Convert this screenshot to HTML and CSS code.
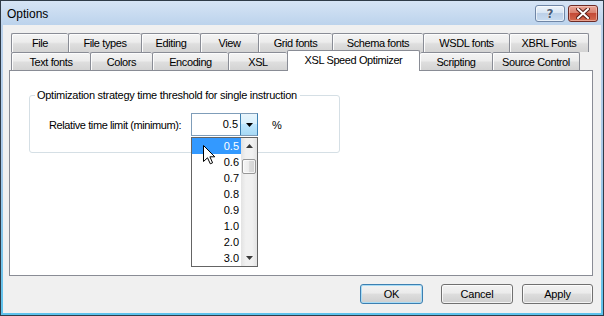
FILE: index.html
```html
<!DOCTYPE html>
<html>
<head>
<meta charset="utf-8">
<link rel="stylesheet" href="styles.css">
</head>
<body>
<div class="window">
  <div class="titlebar">
    <span class="title">Options</span>
    <div class="caption-buttons">
      <div class="cbtn help"><span class="help-glyph">?</span></div>
      <div class="cbtn close">
        <svg width="14" height="11" viewBox="0 0 14 11">
          <path d="M2 1 L12 10 M12 1 L2 10" stroke="#5a1e18" stroke-width="4" stroke-linecap="square"/>
          <path d="M2 1 L12 10 M12 1 L2 10" stroke="#ffffff" stroke-width="2" stroke-linecap="square"/>
        </svg>
      </div>
    </div>
  </div>
  <div class="client">
    <div class="tabs">
      <div class="tabrow row1">
        <div class="tab w57">File</div>
        <div class="tab w73">File types</div>
        <div class="tab w59">Editing</div>
        <div class="tab w58">View</div>
        <div class="tab w74">Grid fonts</div>
        <div class="tab w91">Schema fonts</div>
        <div class="tab w86">WSDL fonts</div>
        <div class="tab w80 last">XBRL Fonts</div>
      </div>
      <div class="tabrow row2">
        <div class="tab w79">Text fonts</div>
        <div class="tab w62">Colors</div>
        <div class="tab w76">Encoding</div>
        <div class="tab w59">XSL</div>
        <div class="tab w133 selected">XSL Speed Optimizer</div>
        <div class="tab w72">Scripting</div>
        <div class="tab w88 last">Source Control</div>
      </div>
    </div>
    <div class="panel">
      <fieldset class="group">
        <legend>Optimization strategy time threshold for single instruction</legend>
        <div class="field-row">
          <span class="label">Relative time limit (minimum):</span>
          <div class="combo">
            <span class="combo-value">0.5</span>
            <span class="combo-btn">
              <svg width="7" height="4" viewBox="0 0 7 4"><path d="M0 0 H7 L3.5 4 Z" fill="#000"/></svg>
            </span>
            <div class="dropdown">
              <div class="items">
                <div class="item active">0.5</div>
                <div class="item">0.6</div>
                <div class="item">0.7</div>
                <div class="item">0.8</div>
                <div class="item">0.9</div>
                <div class="item">1.0</div>
                <div class="item">2.0</div>
                <div class="item">3.0</div>
              </div>
              <div class="scrollbar">
                <div class="sb-arrow">
                  <svg width="7" height="4" viewBox="0 0 7 4"><path d="M3.5 0 L7 4 H0 Z" fill="#3b3b3b"/></svg>
                </div>
                <div class="sb-track">
                  <div class="sb-thumb"></div>
                </div>
                <div class="sb-arrow">
                  <svg width="7" height="4" viewBox="0 0 7 4"><path d="M0 0 H7 L3.5 4 Z" fill="#3b3b3b"/></svg>
                </div>
              </div>
            </div>
          </div>
          <span class="unit">%</span>
        </div>
      </fieldset>
    </div>
    <div class="dialog-buttons">
      <button class="btn default w63">OK</button>
      <button class="btn w72 gap18">Cancel</button>
      <button class="btn w71 gap9">Apply</button>
    </div>
  </div>
  <svg class="cursor" width="13" height="20" viewBox="0 0 13 20">
    <path d="M0.5 0.5 L0.5 16.5 L4.5 12.8 L7.3 18.8 L9.6 17.8 L6.9 11.8 L11.8 11.8 Z" fill="#fff" stroke="#000" stroke-width="1" stroke-linejoin="miter"/>
  </svg>
</div>
</body>
</html>
```

FILE: styles.css
```css
* { box-sizing: border-box; }

body {
  margin: 0;
  font-family: "Liberation Sans", Arial, sans-serif;
  font-size: 11px;
  letter-spacing: -0.4px;
  color: #000;
}

.window {
  position: relative;
  width: 604px;
  height: 316px;
  border: 1px solid #2f3b48;
  background: linear-gradient(to bottom, #d3e2f4 0, #bcd3ec 24px, #a9c8e8 50%, #5cc2ec 100%);
  display: flex;
  flex-direction: column;
}

.titlebar {
  height: 24px;
  flex: none;
  display: flex;
  align-items: flex-start;
  justify-content: space-between;
  padding: 0 5px 0 6px;
  background: linear-gradient(to bottom, #d6e4f5, #bcd3ec);
}

.title {
  font-size: 12px;
  letter-spacing: 0;
  line-height: 14px;
  margin-top: 6px;
}

.caption-buttons {
  display: flex;
  gap: 3px;
  margin-top: 4px;
}

.cbtn {
  width: 30px;
  height: 17px;
  border-radius: 3px;
  display: flex;
  align-items: center;
  justify-content: center;
}

.help {
  border: 1px solid #6f86a6;
  background: linear-gradient(to bottom, #eef4fb 0, #d8e5f3 45%, #bcd0e8 50%, #c9dcf0 100%);
  box-shadow: inset 0 0 0 1px rgba(255,255,255,0.6);
}

.help-glyph {
  font-family: "DejaVu Sans", sans-serif;
  font-weight: bold;
  font-size: 12px;
  letter-spacing: 0;
  color: #4a5d78;
  text-shadow: 0 0 1px #fff, 0 0 1px #fff;
}

.close {
  border: 1px solid #6d2b26;
  background: linear-gradient(to bottom, #e8a497 0, #d9826f 45%, #c44a36 50%, #d36a4f 100%);
  box-shadow: inset 0 0 0 1px rgba(255,220,210,0.5);
}

.client {
  flex: 1;
  margin: 0 2px 2px 2px;
  background: #f0f0f0;
  padding: 8px 0 0 6px;
  display: flex;
  flex-direction: column;
  align-items: flex-start;
}

.tabs {
  margin-left: 2px;
  display: flex;
  flex-direction: column;
}

.tabrow {
  display: flex;
}

.row1 { height: 19px; }
.row2 { height: 18px; }

.tab {
  height: 100%;
  border-top: 1px solid #898c95;
  border-left: 1px solid #898c95;
  border-radius: 2px 2px 0 0;
  background: linear-gradient(to bottom, #f4f4f4 0, #ececec 45%, #dedede 55%, #d3d3d3 100%);
  box-shadow: inset 1px 1px 0 #fcfcfc;
  display: flex;
  align-items: center;
  justify-content: center;
  white-space: nowrap;
}

.tab.last { border-right: 1px solid #898c95; }

.tab.selected {
  position: relative;
  z-index: 2;
  height: 21px;
  margin-top: -2px;
  background: #fff;
  box-shadow: none;
  border-right: 1px solid #898c95;
  padding-bottom: 2px;
}

.tab.selected + .tab { border-left: none; }

.w57 { width: 57px; }
.w58 { width: 58px; }
.w59 { width: 59px; }
.w62 { width: 62px; }
.w63 { width: 63px; }
.w71 { width: 71px; }
.w72 { width: 72px; }
.w73 { width: 73px; }
.w74 { width: 74px; }
.w76 { width: 76px; }
.w79 { width: 79px; }
.w80 { width: 80px; }
.w86 { width: 86px; }
.w88 { width: 88px; }
.w91 { width: 91px; }
.w133 { width: 133px; }

.panel {
  position: relative;
  z-index: 1;
  width: 584px;
  height: 206px;
  border: 1px solid #898c95;
  background: #fff;
  padding: 18px 0 0 19px;
}

.group {
  margin: 0;
  width: 311px;
  border: 1px solid #d5dfe5;
  border-radius: 3px;
  padding: 11px 0 16px 5px;
  min-width: 0;
}

.group legend {
  padding: 0 3px 0 2px;
  line-height: 13px;
  letter-spacing: -0.28px;
  color: #000;
}

.field-row {
  display: flex;
  align-items: center;
  margin-left: 14px;
}

.label {
  width: 142px;
  white-space: nowrap;
}

.combo {
  position: relative;
  width: 67px;
  height: 23px;
  border: 1px solid #7f9db9;
  border-right-color: #3c7fb1;
  background: #fff;
  display: flex;
}

.combo-value {
  flex: 1;
  text-align: right;
  padding-right: 2px;
  line-height: 21px;
  font-size: 11px;
  letter-spacing: 0;
}

.combo-btn {
  width: 17px;
  border-left: 1px solid #3c7fb1;
  background: linear-gradient(to bottom, #e8f5fc 0, #d9f0fc 45%, #bee6fd 50%, #a7d9f5 100%);
  display: flex;
  align-items: center;
  justify-content: center;
}

.unit {
  margin-left: 14px;
}

.dropdown {
  position: absolute;
  z-index: 10;
  left: -1px;
  top: 23px;
  width: 67px;
  height: 130px;
  border: 1px solid #646464;
  background: #fff;
  display: flex;
}

.items {
  width: 49px;
  display: flex;
  flex-direction: column;
}

.item {
  height: 16px;
  line-height: 16px;
  text-align: right;
  padding-right: 2px;
  letter-spacing: 0;
}

.item.active {
  background: #3399ff;
  color: #fff;
}

.scrollbar {
  width: 16px;
  display: flex;
  flex-direction: column;
  background: linear-gradient(to right, #e3e3e3 0, #f1f1f1 30%, #f1f1f1 70%, #e3e3e3 100%);
}

.sb-arrow {
  height: 16px;
  display: flex;
  align-items: center;
  justify-content: center;
}

.sb-track {
  flex: 1;
  padding: 5px 1px 0 1px;
}

.sb-thumb {
  height: 15px;
  border: 1px solid #979797;
  border-radius: 2px;
  background: linear-gradient(to right, #f5f5f5 0, #ececec 50%, #dcdcdc 51%, #d4d4d4 100%);
  box-shadow: inset 0 0 0 1px rgba(255,255,255,0.7);
}

.dialog-buttons {
  width: 584px;
  margin-top: 8px;
  display: flex;
  justify-content: flex-end;
}

.btn {
  height: 20px;
  padding: 0;
  font-family: inherit;
  font-size: 11px;
  letter-spacing: -0.2px;
  color: #000;
  border: 1px solid #707070;
  border-radius: 3px;
  background: linear-gradient(to bottom, #f2f2f2 0, #ebebeb 45%, #dddddd 50%, #cfcfcf 100%);
  box-shadow: inset 0 0 0 1px rgba(255,255,255,0.75);
}

.btn.default {
  border-color: #3c7fb1;
  box-shadow: inset 0 0 0 1px #a9dcf5;
}

.gap18 { margin-left: 18px; }
.gap9 { margin-left: 9px; }

.cursor {
  position: absolute;
  z-index: 20;
  left: 202px;
  top: 144px;
}
```
